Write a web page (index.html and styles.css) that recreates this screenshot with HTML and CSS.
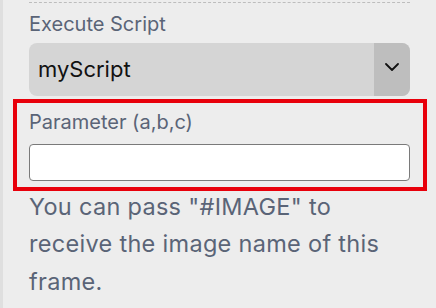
FILE: index.html
```html
<!DOCTYPE html>
<html>
<head>
<meta charset="utf-8">
<link rel="stylesheet" href="styles.css">
</head>
<body>
<div class="panel">
  <div class="divider"></div>
  <label class="label label-first">Execute Script</label>
  <div class="select">
    <span class="select-value">myScript</span>
    <span class="select-arrow">
      <svg width="14" height="8" viewBox="0 0 14 8"><path d="M1 1 L7 7 L13 1" fill="none" stroke="#111" stroke-width="1.8" stroke-linecap="round" stroke-linejoin="round"/></svg>
    </span>
  </div>
  <div class="field highlighted">
    <label class="label">Parameter (a,b,c)</label>
    <div class="input"></div>
  </div>
  <p class="help">You can pass "#IMAGE" to receive the image name of this frame.</p>
</div>
</body>
</html>
```
FILE: styles.css
```css
html, body {
  margin: 0;
  padding: 0;
  background: #ededed;
  font-family: Inter, "Noto Sans", sans-serif;
}
body {
  width: 436px;
  height: 308px;
  overflow: hidden;
}
.panel {
  border-left: 3px solid #dfdfdf;
  padding: 2px 26px 0 26px;
  height: 306px;
}
.divider {
  border-top: 1px dashed #bdbdbd;
}
.label {
  display: block;
  font-size: 20px;
  line-height: 24px;
  color: #5a6477;
}
.label-first {
  margin-top: 8.7px;
}
.select {
  margin-top: 7.3px;
  height: 53px;
  border-radius: 8px;
  background: #d5d5d5;
  display: flex;
  overflow: hidden;
}
.select-value {
  flex: 1;
  display: flex;
  align-items: center;
  padding-left: 9px;
  font-size: 22px;
  color: #111;
}
.select-arrow {
  width: 36px;
  background: #bebebe;
  display: flex;
  align-items: center;
  justify-content: center;
  padding-bottom: 4px;
  box-sizing: border-box;
}
.field {
  margin-top: 14.5px;
  position: relative;
}
.input {
  margin-top: 9.5px;
  height: 37px;
  box-sizing: border-box;
  border: 1px solid #7a7a7a;
  border-radius: 4px;
  background: #fff;
}
.highlighted::after {
  content: "";
  position: absolute;
  top: -11.5px;
  bottom: -10px;
  left: -16.5px;
  right: -16.5px;
  border: 4px solid #e8000b;
  pointer-events: none;
}
.help {
  margin: 7px 0 0 0;
  font-size: 23.5px;
  letter-spacing: 0.3px;
  line-height: 37.5px;
  color: #5a6477;
}
```
